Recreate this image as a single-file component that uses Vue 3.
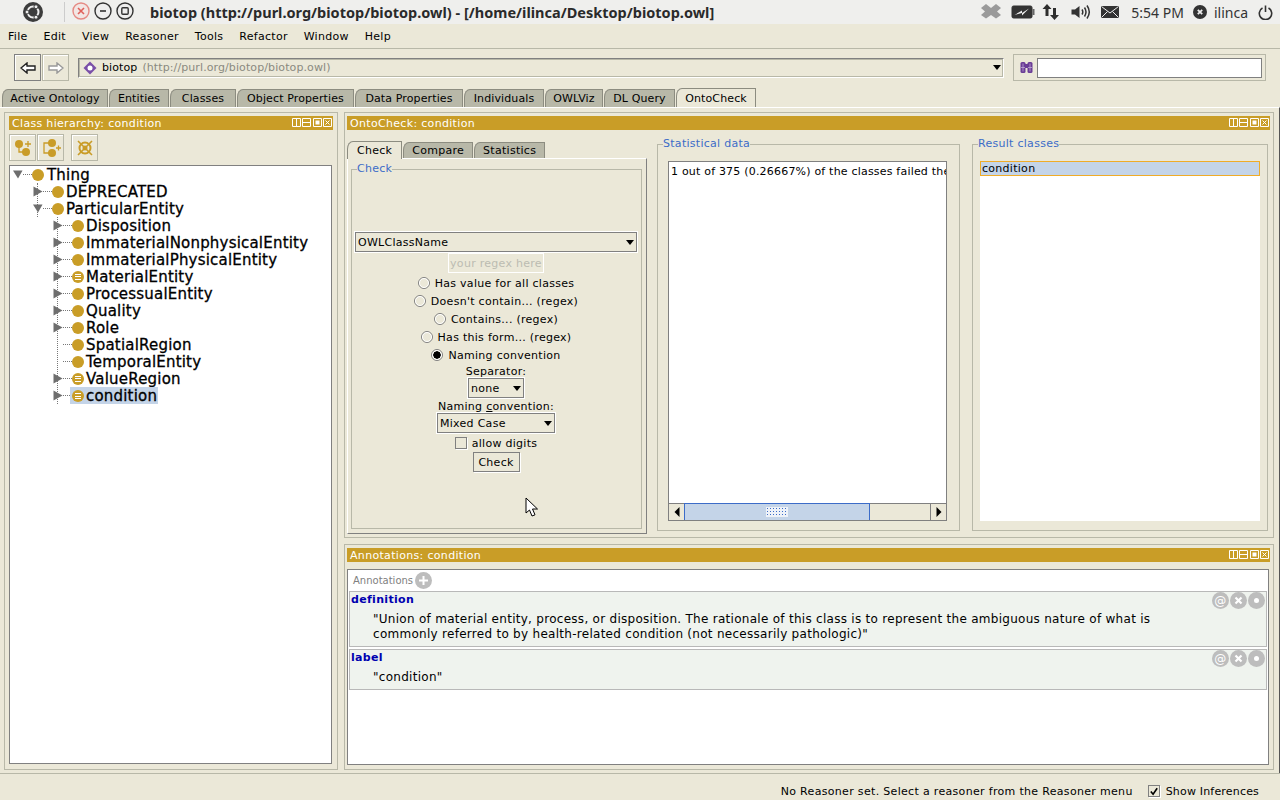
<script setup>
const menus = ['File', 'Edit', 'View', 'Reasoner', 'Tools', 'Refactor', 'Window', 'Help'];

const tabs = [
    { name: 'Active Ontology', width: 106 },
    { name: 'Entities', width: 60 },
    { name: 'Classes', width: 66 },
    { name: 'Object Properties', width: 117 },
    { name: 'Data Properties', width: 108 },
    { name: 'Individuals', width: 80 },
    { name: 'OWLViz', width: 58 },
    { name: 'DL Query', width: 71 },
    { name: 'OntoCheck', width: 80, active: true },
];

const level1 = [
    { name: 'DEPRECATED', arrow: 'right' },
    { name: 'ParticularEntity', arrow: 'down' },
];

const level2 = [
    { name: 'Disposition', arrow: 'right' },
    { name: 'ImmaterialNonphysicalEntity', arrow: 'right' },
    { name: 'ImmaterialPhysicalEntity', arrow: 'right' },
    { name: 'MaterialEntity', arrow: 'right', defined: true },
    { name: 'ProcessualEntity', arrow: 'right' },
    { name: 'Quality', arrow: 'right' },
    { name: 'Role', arrow: 'right' },
    { name: 'SpatialRegion' },
    { name: 'TemporalEntity' },
    { name: 'ValueRegion', arrow: 'right', defined: true },
    { name: 'condition', arrow: 'right', defined: true, selected: true },
];

const radios = [
    { label: "Has value for all classes" },
    { label: "Doesn't contain... (regex)" },
    { label: 'Contains... (regex)' },
    { label: 'Has this form... (regex)' },
    { label: 'Naming convention', checked: true },
];

const annotations = [
    {
        prop: 'definition',
        lines: [
            '"Union of material entity, process, or disposition. The rationale of this class is to represent the ambiguous nature of what is',
            'commonly referred to by health-related condition (not necessarily pathologic)"',
        ],
    },
    { prop: 'label', lines: ['"condition"'] },
];
</script>

<template>
    <div class="app">
        <header class="topbar">
            <svg class="ubuntu" width="22" height="22" viewBox="0 0 22 22">
                <circle cx="11" cy="11" r="10" fill="#3c3c3c" />
                <circle cx="11" cy="11" r="5.5" fill="none" stroke="#eee" stroke-width="2" />
                <circle cx="5" cy="11" r="2" fill="#eee" stroke="#3c3c3c" />
                <circle cx="14" cy="5.8" r="2" fill="#eee" stroke="#3c3c3c" />
                <circle cx="14" cy="16.2" r="2" fill="#eee" stroke="#3c3c3c" />
            </svg>
            <span class="top-sep"></span>
            <div class="win-btns">
                <svg width="18" height="18" viewBox="0 0 18 18">
                    <circle cx="9" cy="9" r="8" fill="#f2e6e4" stroke="#e58a84" stroke-width="1.4" />
                    <path d="M6 6l6 6M12 6l-6 6" stroke="#e0605a" stroke-width="1.6" />
                </svg>
                <svg width="18" height="18" viewBox="0 0 18 18">
                    <circle cx="9" cy="9" r="8" fill="#eee" stroke="#333" stroke-width="1.4" />
                    <path d="M6 9h6" stroke="#333" stroke-width="1.6" />
                </svg>
                <svg width="18" height="18" viewBox="0 0 18 18">
                    <circle cx="9" cy="9" r="8" fill="#eee" stroke="#333" stroke-width="1.4" />
                    <rect x="5.8" y="5.8" width="6.4" height="6.4" rx="1" fill="none" stroke="#333" stroke-width="1.4" />
                </svg>
            </div>
            <div class="win-title">biotop (http://purl.org/biotop/biotop.owl) - [/home/ilinca/Desktop/biotop.owl]</div>
            <div class="tray">
                <svg class="t-drop" width="20" height="18" viewBox="0 0 20 18">
                    <path d="M5 1l5 4 5-4 5 4-4 3.5 4 3.5-5 3.5-5-3.5-5 3.5-5-3.5 4-3.5-4-3.5z" fill="#9a9a9a" />
                </svg>
                <svg class="t-batt" width="24" height="14" viewBox="0 0 24 14">
                    <rect x="1" y="1" width="20" height="12" rx="1.5" fill="#333" stroke="#333" />
                    <rect x="21.5" y="4" width="2" height="6" fill="#666" />
                    <path d="M3.500 10L11 5.500V8L18 3.500 11 10.500V8z" fill="#eee" />
                </svg>
                <svg class="t-net" width="18" height="18" viewBox="0 0 18 18">
                    <path d="M5 1L0.5 6H3.5V13H6.5V6H9.5z" fill="#2e2e2e" />
                    <path d="M12.5 17L8 12H11V5H14V12H17z" fill="#2e2e2e" />
                </svg>
                <svg class="t-snd" width="20" height="16" viewBox="0 0 20 16">
                    <path d="M0.5 5.5H4L8.5 2V14L4 10.5H0.5z" fill="#333" />
                    <path d="M11 5.5q1.6 2.5 0 5M13.5 3.5q3 4.5 0 9M16 1.5q4.6 6.5 0 13" fill="none" stroke="#333" stroke-width="1.5" />
                </svg>
                <svg class="t-mail" width="18" height="12" viewBox="0 0 18 12">
                    <rect width="18" height="12" fill="#333" />
                    <path d="M0.5 0.5L9 7l8.5-6.500M0.500 11.500L6.500 5.500M17.500 11.500L11.500 5.500" fill="none" stroke="#eee" />
                </svg>
                <span class="t-time">5:54 PM</span>
                <svg class="t-user" width="14" height="14" viewBox="0 0 14 14">
                    <circle cx="7" cy="7" r="7" fill="#333" />
                    <path d="M4.800 4.800l4.400 4.400M9.200 4.800l-4.400 4.400" stroke="#eee" stroke-width="1.800" />
                </svg>
                <span class="t-name">ilinca</span>
                <svg class="t-power" width="15" height="15" viewBox="0 0 15 15">
                    <path d="M4.500 3a6.200 6.200 0 1 0 6 0" fill="none" stroke="#333" stroke-width="1.600" />
                    <path d="M7.500 0.500v6.500" stroke="#333" stroke-width="1.600" />
                </svg>
            </div>
        </header>

        <nav class="menubar">
            <span v-for="m in menus" :key="m" class="menu">{{ m }}</span>
        </nav>

        <div class="toolbar">
            <div class="nav-btns">
                <button class="nav-btn">
                    <svg width="16" height="12" viewBox="0 0 16 12">
                        <path d="M1 6L7 1V4H15V8H7V11z" fill="#fff" stroke="#222" stroke-width="1.400" />
                    </svg>
                </button>
                <button class="nav-btn off">
                    <svg width="16" height="12" viewBox="0 0 16 12">
                        <path d="M15 6L9 1V4H1V8H9V11z" fill="#fff" stroke="#999" stroke-width="1.400" />
                    </svg>
                </button>
            </div>
            <div class="address">
                <svg width="14" height="14" viewBox="0 0 14 14">
                    <path d="M7 0.500L13.500 7 7 13.500 0.500 7z" fill="#7a4fa8" />
                    <circle cx="7" cy="7" r="2.500" fill="#fff" />
                </svg>
                <span class="addr-name">biotop</span>
                <span class="addr-uri">(http://purl.org/biotop/biotop.owl)</span>
                <i class="caret addr-caret"></i>
            </div>
            <div class="search">
                <svg width="13" height="13" viewBox="0 0 13 13">
                    <rect x="0.500" y="1" width="5" height="11" rx="1.500" fill="#6a3d96" />
                    <rect x="7.500" y="1" width="5" height="11" rx="1.500" fill="#6a3d96" />
                    <rect x="5" y="3" width="3" height="4" fill="#6a3d96" />
                    <path d="M3 2.500v8M10 2.500v8M1 6.500h4M8 6.500h4" stroke="#c9b6dc" stroke-width="0.700" />
                </svg>
                <div class="search-input"></div>
            </div>
        </div>

        <div class="tabbar">
            <div
                v-for="t in tabs"
                :key="t.name"
                class="tab"
                :class="{ active: t.active }"
                :style="{ width: t.width + 'px' }"
            >
                {{ t.name }}
            </div>
        </div>

        <main class="workspace">
            <section class="view left-view">
                <div class="view-title">
                    <span>Class hierarchy: condition</span>
                    <svg class="view-btns" width="41" height="10" viewBox="0 0 41 10">
                        <path d="M0.500 0.500h8v8h-8zM4.500 0.500v8M10.500 0.500h8v8h-8zM10.500 4.500h8M21.500 0.500h8v8h-8zM31.500 0.500h8v8h-8zM33.500 2.500l4 4M37.500 2.500l-4 4" fill="none" stroke="#fff" />
                        <rect x="23.500" y="2.500" width="4" height="4" fill="#fff" />
                    </svg>
                </div>
                <div class="tree-tools">
                    <button class="tool-btn">
                        <svg width="20" height="20" viewBox="0 0 20 20">
                            <circle cx="6" cy="6" r="4" fill="#c99c28" />
                            <circle cx="13" cy="14" r="4" fill="#c99c28" />
                            <path d="M6 9v5h4M15 3v6M12 6h6" fill="none" stroke="#c99c28" stroke-width="1.300" />
                        </svg>
                    </button>
                    <button class="tool-btn">
                        <svg width="20" height="20" viewBox="0 0 20 20">
                            <circle cx="11" cy="5" r="4" fill="#c99c28" />
                            <circle cx="11" cy="15" r="4" fill="#c99c28" />
                            <path d="M8 5H3v10h5M15 10h5M17.500 7.500v5" fill="none" stroke="#c99c28" stroke-width="1.300" />
                        </svg>
                    </button>
                    <button class="tool-btn gap">
                        <svg width="20" height="20" viewBox="0 0 20 20">
                            <circle cx="10" cy="10" r="5.500" fill="none" stroke="#c99c28" stroke-width="2" />
                            <circle cx="10" cy="10" r="2.500" fill="#c99c28" />
                            <path d="M3 3l14 14M17 3L3 17" stroke="#c99c28" stroke-width="1.600" />
                        </svg>
                    </button>
                </div>
                <div class="tree">
                    <div class="tree-row root">
                        <svg class="arrow" width="10" height="17" viewBox="0 0 10 17"><path d="M0 4.500h9.500L5 12.500z" fill="#6e6e6e" /></svg>
                        <i class="hline"></i>
                        <i class="dot"></i>
                        <span class="tree-label">Thing</span>
                    </div>
                    <div class="branch b1">
                        <div v-for="n in level1" :key="n.name" class="tree-row">
                            <svg v-if="n.arrow === 'right'" class="arrow" width="10" height="17" viewBox="0 0 10 17"><path d="M0.500 3.500v10L9.500 8.500z" fill="#6e6e6e" /></svg>
                            <svg v-else class="arrow" width="10" height="17" viewBox="0 0 10 17"><path d="M0 4.500h9.500L5 12.500z" fill="#6e6e6e" /></svg>
                            <i class="hline"></i>
                            <i class="dot"></i>
                            <span class="tree-label">{{ n.name }}</span>
                        </div>
                    </div>
                    <div class="branch b2">
                        <div v-for="n in level2" :key="n.name" class="tree-row">
                            <svg v-if="n.arrow" class="arrow" width="10" height="17" viewBox="0 0 10 17"><path d="M0.500 3.500v10L9.500 8.500z" fill="#6e6e6e" /></svg>
                            <span v-else class="arrow"></span>
                            <i class="hline"></i>
                            <span class="node" :class="{ selected: n.selected }">
                                <i class="dot" :class="{ defined: n.defined }"></i>
                                <span class="tree-label">{{ n.name }}</span>
                            </span>
                        </div>
                    </div>
                </div>
            </section>

            <div class="right-col">
                <section class="view onto-view">
                    <div class="view-title">
                        <span>OntoCheck: condition</span>
                        <svg class="view-btns" width="41" height="10" viewBox="0 0 41 10">
                            <path d="M0.500 0.500h8v8h-8zM4.500 0.500v8M10.500 0.500h8v8h-8zM10.500 4.500h8M21.500 0.500h8v8h-8zM31.500 0.500h8v8h-8zM33.500 2.500l4 4M37.500 2.500l-4 4" fill="none" stroke="#fff" />
                            <rect x="23.500" y="2.500" width="4" height="4" fill="#fff" />
                        </svg>
                    </div>
                    <div class="onto-body">
                        <div class="check-side">
                            <div class="sub-tabs">
                                <div class="sub-tab active">Check</div>
                                <div class="sub-tab">Compare</div>
                                <div class="sub-tab">Statistics</div>
                            </div>
                            <div class="sub-pane">
                                <fieldset class="group check-group">
                                    <legend>Check</legend>
                                    <div class="combo wide"><span>OWLClassName</span><i class="caret"></i></div>
                                    <div class="regex">your regex here</div>
                                    <div v-for="r in radios" :key="r.label" class="radio-row">
                                        <i class="radio" :class="{ checked: r.checked }"></i>
                                        <span>{{ r.label }}</span>
                                    </div>
                                    <div class="field-label sep-label">Separator:</div>
                                    <div class="combo sep"><span>none</span><i class="caret"></i></div>
                                    <div class="field-label conv-label">Naming <u>c</u>onvention:</div>
                                    <div class="combo conv"><span>Mixed Case</span><i class="caret"></i></div>
                                    <div class="check-row"><i class="checkbox"></i><span>allow digits</span></div>
                                    <button class="check-btn">Check</button>
                                </fieldset>
                            </div>
                        </div>

                        <fieldset class="group stats-group">
                            <legend>Statistical data</legend>
                            <div class="stats-box">
                                <div class="stats-text">1 out of 375 (0.26667%) of the classes failed the</div>
                                <div class="hscroll">
                                    <div class="sb-arrow">
                                        <svg width="6" height="10" viewBox="0 0 6 10"><path d="M5.500 0v10L0.500 5z" fill="#000" /></svg>
                                    </div>
                                    <div class="sb-thumb"><i class="grip"></i></div>
                                    <div class="sb-track"></div>
                                    <div class="sb-arrow end">
                                        <svg width="6" height="10" viewBox="0 0 6 10"><path d="M0.500 0v10L5.500 5z" fill="#000" /></svg>
                                    </div>
                                </div>
                            </div>
                        </fieldset>

                        <fieldset class="group result-group">
                            <legend>Result classes</legend>
                            <div class="result-box">
                                <div class="result-row">condition</div>
                            </div>
                        </fieldset>
                    </div>
                </section>

                <section class="view anno-view">
                    <div class="view-title">
                        <span>Annotations: condition</span>
                        <svg class="view-btns" width="41" height="10" viewBox="0 0 41 10">
                            <path d="M0.500 0.500h8v8h-8zM4.500 0.500v8M10.500 0.500h8v8h-8zM10.500 4.500h8M21.500 0.500h8v8h-8zM31.500 0.500h8v8h-8zM33.500 2.500l4 4M37.500 2.500l-4 4" fill="none" stroke="#fff" />
                            <rect x="23.500" y="2.500" width="4" height="4" fill="#fff" />
                        </svg>
                    </div>
                    <div class="anno-box">
                        <div class="anno-head">
                            <span>Annotations</span>
                            <svg width="17" height="17" viewBox="0 0 17 17">
                                <circle cx="8.500" cy="8.500" r="8.500" fill="#bdbdbd" />
                                <path d="M8.500 4v9M4 8.500h9" stroke="#fff" stroke-width="2" />
                            </svg>
                        </div>
                        <div v-for="a in annotations" :key="a.prop" class="anno-row">
                            <div class="anno-prop">{{ a.prop }}</div>
                            <div class="anno-value">
                                <div v-for="l in a.lines" :key="l">{{ l }}</div>
                            </div>
                            <div class="anno-actions">
                                <svg width="17" height="17" viewBox="0 0 17 17">
                                    <circle cx="8.500" cy="8.500" r="8.500" fill="#bdbdbd" />
                                    <text x="8.500" y="12.500" text-anchor="middle" font-size="12" fill="#fff" font-family="DejaVu Sans">@</text>
                                </svg>
                                <svg width="17" height="17" viewBox="0 0 17 17">
                                    <circle cx="8.500" cy="8.500" r="8.500" fill="#bdbdbd" />
                                    <path d="M5.500 5.500l6 6M11.500 5.500l-6 6" stroke="#fff" stroke-width="2.200" />
                                </svg>
                                <svg width="17" height="17" viewBox="0 0 17 17">
                                    <circle cx="8.500" cy="8.500" r="8.500" fill="#bdbdbd" />
                                    <circle cx="8.500" cy="8.500" r="2.500" fill="#fff" />
                                </svg>
                            </div>
                        </div>
                    </div>
                </section>
            </div>
        </main>

        <footer class="statusbar">
            <span class="status-msg">No Reasoner set. Select a reasoner from the Reasoner menu</span>
            <i class="checkbox status-check">
                <svg width="11" height="11" viewBox="0 0 11 11"><path d="M2 5.500l2.500 3L9 2" fill="none" stroke="#000" stroke-width="1.800" /></svg>
            </i>
            <span class="status-infer">Show Inferences</span>
        </footer>

        <svg class="cursor" width="14" height="20" viewBox="0 0 14 20">
            <path d="M1 1V16L4.500 13 7 19 10 17.800 7.500 12H12.500z" fill="#fff" stroke="#000" />
        </svg>
    </div>
</template>

<style scoped>
.app {
    position: relative;
    width: 1280px;
    height: 800px;
    overflow: hidden;
    display: flex;
    flex-direction: column;
    background: #ebe8d8;
    color: #000;
    font: 11px 'DejaVu Sans', sans-serif;
    letter-spacing: 0.28px;
}

i {
    display: block;
    flex-shrink: 0;
}

button {
    padding: 0;
    font: inherit;
    letter-spacing: inherit;
    background: transparent;
}

/* ubuntu panel */
.topbar {
    height: 24px;
    flex-shrink: 0;
    display: flex;
    align-items: center;
    background: #efefed;
    padding-left: 22px;
    letter-spacing: 0;
}

.top-sep {
    width: 1px;
    height: 20px;
    margin-left: 20px;
    background: #ccc;
}

.win-btns {
    display: flex;
    gap: 4px;
    margin-left: 7px;
    margin-top: -2px;
}

.win-title {
    margin-left: 16px;
    font: bold 14.5px 'Noto Sans', sans-serif;
    color: #2a2a2a;
    white-space: nowrap;
}

.tray {
    margin-left: auto;
    display: flex;
    align-items: center;
    padding-right: 7px;
    color: #333;
    font: 14px 'Noto Sans', sans-serif;
}

.t-batt {
    margin-left: 10px;
}
.t-net {
    margin-left: 7px;
}
.t-snd {
    margin-left: 11px;
}
.t-mail {
    margin-left: 10px;
}
.t-time {
    margin-left: 12px;
}
.t-user {
    margin-left: 9px;
}
.t-name {
    margin-left: 7px;
}
.t-power {
    margin-left: 10px;
}

/* menus */
.menubar {
    height: 24px;
    flex-shrink: 0;
    display: flex;
    align-items: center;
    gap: 16px;
    padding-left: 8px;
    border-bottom: 1px solid #b8b8a8;
    box-sizing: content-box;
}

.toolbar {
    height: 39px;
    flex-shrink: 0;
    display: flex;
    align-items: center;
    box-sizing: border-box;
    padding: 0 14px 2px;
}

.nav-btns {
    display: flex;
    gap: 1px;
}

.nav-btn {
    width: 27px;
    height: 27px;
    display: flex;
    align-items: center;
    justify-content: center;
    border: 1px solid #808080;
    box-shadow: 1px 1px 0 #fff inset;
}

.nav-btn.off {
    border-color: #b8b8a8;
}

.address {
    flex: 1;
    height: 20px;
    margin-left: 9px;
    display: flex;
    align-items: center;
    padding-left: 4px;
    box-sizing: border-box;
    border: 1px solid #808080;
    border-right-color: #fff;
    border-bottom-color: #fff;
    outline: 1px solid #b8b8a8;
    outline-offset: -2px;
    letter-spacing: 0.1px;
}

.addr-name {
    margin-left: 5px;
}

.addr-uri {
    margin-left: 5px;
    color: #8a8a80;
}

.caret {
    width: 0;
    height: 0;
    border-left: 4px solid transparent;
    border-right: 4px solid transparent;
    border-top: 5px solid #000;
}

.addr-caret {
    margin-left: auto;
    margin-right: 2px;
}

.search {
    width: 253px;
    height: 27px;
    margin-left: 9px;
    margin-right: 0;
    display: flex;
    align-items: center;
    gap: 4px;
    padding: 0 3px 0 6px;
    box-sizing: border-box;
    border: 1px solid #b8b8a8;
}

.search-input {
    flex: 1;
    height: 20px;
    box-sizing: border-box;
    background: #fff;
    border: 1px solid #808080;
}

/* workspace tabs */
.tabbar {
    height: 19px;
    flex-shrink: 0;
    display: flex;
    gap: 1px;
    padding-left: 2px;
    letter-spacing: 0.12px;
}

.tab {
    height: 18px;
    margin-top: 1px;
    box-sizing: border-box;
    display: flex;
    align-items: center;
    justify-content: center;
    background: #b8b8a8;
    border: 1px solid #8c8c80;
    border-bottom: none;
    border-top-left-radius: 6px 8px;
    white-space: nowrap;
}

.tab.active {
    background: #ebe8d8;
    height: 19px;
    margin-top: 0;
    border-bottom: none;
}

.workspace {
    flex: 1;
    min-height: 0;
    display: flex;
    gap: 6px;
    padding: 4px 5px 3px 4px;
    border-top: 1px solid #fff;
    border-right: 1px solid #555;
    margin-bottom: 0;
}

.view {
    box-sizing: border-box;
    display: flex;
    flex-direction: column;
    border: 1px solid #b8b8a8;
    padding: 3px 4px;
}

.left-view {
    width: 334px;
    flex-shrink: 0;
    padding-bottom: 5px;
}

.view-title {
    height: 14px;
    flex-shrink: 0;
    display: flex;
    align-items: center;
    justify-content: space-between;
    padding: 0 0 0 3px;
    background: #c99d27;
    color: #fff;
    letter-spacing: 0.32px;
}

.tree-tools {
    display: flex;
    gap: 1px;
    margin: 4px 0;
}

.tool-btn {
    width: 27px;
    height: 27px;
    display: flex;
    align-items: center;
    justify-content: center;
    border: 1px solid #b8b8a8;
    box-shadow: 1px 1px 0 #fff inset;
}

.tool-btn.gap {
    margin-left: 6px;
}

.tree {
    flex: 1;
    background: #fff;
    border: 1px solid #808080;
    margin-right: 1px;
    padding: 0 0 0 3px;
    font-size: 15px;
    letter-spacing: 0.2px;
    -webkit-text-stroke: 0.3px #000;
    overflow: hidden;
}

.tree-row {
    height: 17px;
    display: flex;
    align-items: center;
    white-space: nowrap;
}

.arrow {
    width: 10px;
    height: 17px;
    flex-shrink: 0;
    background: #fff;
}

.hline {
    width: 9px;
    border-top: 1px dotted #777;
}

.branch {
    border-left: 1px dotted #777;
}

.branch .tree-row {
    margin-left: -5px;
}

.branch .arrow {
    background: transparent;
}

.b1 {
    margin-left: 24px;
}

.b2 {
    margin-left: 44px;
}

.dot {
    position: relative;
    width: 12px;
    height: 12px;
    border-radius: 50%;
    background: #c99d27;
}

.dot.defined::after {
    content: '';
    position: absolute;
    left: 3px;
    right: 3px;
    top: 3px;
    height: 6px;
    background: repeating-linear-gradient(#fff 0 1px, transparent 1px 2.5px);
}

.tree-label {
    margin-left: 2px;
}

.root .tree-label {
    margin-left: 3px;
}

.node {
    display: flex;
    align-items: center;
    height: 17px;
}

.node.selected {
    background: #c4d4e8;
    padding: 0 1px 0 2px;
    margin-left: -2px;
}

.right-col {
    flex: 1;
    min-width: 0;
    display: flex;
    flex-direction: column;
    gap: 6px;
}

.onto-view {
    height: 426px;
    flex-shrink: 0;
    padding: 3px 3px 0 2px;
}

.onto-body {
    flex: 1;
    min-height: 0;
    display: flex;
    padding-top: 11px;
}

.check-side {
    width: 300px;
    flex-shrink: 0;
    display: flex;
    flex-direction: column;
    height: 393px;
}

.sub-tabs {
    display: flex;
    gap: 1px;
    height: 18px;
    flex-shrink: 0;
}

.sub-tab {
    padding: 0 8px 1px;
    height: 17px;
    margin-top: 1px;
    box-sizing: border-box;
    display: flex;
    align-items: center;
    background: #b8b8a8;
    border: 1px solid #8c8c80;
    border-bottom: none;
    border-top-left-radius: 6px 8px;
}

.sub-tab.active {
    background: #ebe8d8;
    height: 18px;
    margin-top: 0;
    padding: 0 9px;
    position: relative;
    z-index: 1;
    margin-bottom: -1px;
}

.sub-pane {
    flex: 1;
    min-height: 0;
    display: flex;
    box-sizing: border-box;
    padding: 3px 4px 4px 3px;
    border-top: 1px solid #fff;
    border-right: 1px solid #808080;
    border-bottom: 1px solid #808080;
    border-left: 1px solid #fff;
    margin-top: -1px;
}

.group {
    margin: 0;
    min-width: 0;
    box-sizing: border-box;
    border: 1px solid #b8b8a8;
    padding: 0;
}

.group legend {
    margin-left: 5px;
    padding: 0;
    color: #3c6cc8;
    line-height: 14px;
}

.check-group {
    flex: 1;
    display: flex;
    flex-direction: column;
    align-items: center;
    padding-right: 1px;
}

.combo {
    box-sizing: border-box;
    height: 20px;
    display: flex;
    align-items: center;
    justify-content: space-between;
    padding: 0 2px;
    border: 1px solid #808080;
    outline: 1px solid #fff;
    outline-offset: 0;
}

.combo.wide {
    width: 282px;
    margin-top: 56px;
}

.regex {
    width: 96px;
    height: 20px;
    margin-top: 1px;
    margin-bottom: 1px;
    box-sizing: border-box;
    display: flex;
    align-items: center;
    justify-content: center;
    background: #ebe8d8;
    border: 1px solid #fff;
    color: #bcbcb2;
}

.radio-row {
    height: 18px;
    display: flex;
    align-items: center;
    gap: 5px;
}

.radio {
    width: 12px;
    height: 12px;
    box-sizing: border-box;
    border-radius: 50%;
    border: 1px solid #808080;
    outline: 1px solid #fff;
    outline-offset: -2px;
}

.radio.checked {
    background: radial-gradient(circle, #000 0 3.500px, #ebe8d8 4px);
}

.field-label {
    line-height: 13px;
}

.sep-label {
    margin-top: 1px;
}

.combo.sep {
    width: 56px;
}

.conv-label {
    margin-top: 2px;
}

.combo.conv {
    width: 118px;
}

.check-row {
    height: 18px;
    margin-top: 1px;
    display: flex;
    align-items: center;
    gap: 5px;
}

.checkbox {
    width: 12px;
    height: 12px;
    box-sizing: border-box;
    border: 1px solid #808080;
    box-shadow: 1px 1px 0 #fff;
}

.check-btn {
    width: 47px;
    height: 20px;
    border: 1px solid #808080;
    box-shadow: 1px 1px 0 #fff;
    color: #000;
}

.stats-group {
    width: 303px;
    margin-left: 10px;
    margin-top: -4px;
    height: 394px;
    flex-shrink: 0;
    padding: 10px 12px 9px 10px;
    display: flex;
}

.stats-group legend {
    margin-left: -5px;
}

.stats-box {
    flex: 1;
    min-width: 0;
    display: flex;
    flex-direction: column;
    background: #fff;
    border: 1px solid #808080;
}

.stats-text {
    flex: 1;
    padding: 3px 2px;
    white-space: nowrap;
    overflow: hidden;
    letter-spacing: 0.2px;
}

.hscroll {
    height: 16px;
    display: flex;
    border-top: 1px solid #808080;
    background: #ebe8d8;
}

.sb-arrow {
    width: 15px;
    display: flex;
    align-items: center;
    justify-content: center;
}

.sb-arrow.end {
    border-left: 1px solid #808080;
}

.sb-thumb {
    width: 186px;
    display: flex;
    align-items: center;
    justify-content: center;
    background: #c4d4e8;
    border: 1px solid #3c6cc8;
    border-bottom: none;
    box-sizing: border-box;
    margin-top: -1px;
}

.grip {
    width: 22px;
    height: 10px;
    background: radial-gradient(circle, #3c6cc8 0.6px, transparent 0.8px) 0 0 / 3px 3px, #eef2f8;
}

.sb-track {
    flex: 1;
}

.result-group {
    width: 296px;
    margin-left: 12px;
    margin-top: -4px;
    height: 394px;
    flex-shrink: 0;
    padding: 10px 7px 9px 7px;
    display: flex;
}

.result-group legend {
    margin-left: -2px;
}

.result-box {
    flex: 1;
    min-width: 0;
    background: #fff;
}

.result-row {
    height: 15px;
    box-sizing: border-box;
    display: flex;
    align-items: center;
    padding-left: 1px;
    background: #c4d4e8;
    border: 1px solid #f0ac28;
}

.anno-view {
    flex: 1;
    min-height: 0;
    padding: 3px 3px 4px 2px;
}

.anno-box {
    flex: 1;
    min-height: 0;
    margin-top: 7px;
    margin-right: 1px;
    background: #fff;
    border: 1px solid #808080;
    padding: 0 1px;
}

.anno-head {
    height: 21px;
    display: flex;
    align-items: center;
    gap: 2px;
    padding-left: 4px;
    color: #808080;
    font-size: 10px;
    letter-spacing: 0;
}

.anno-row {
    position: relative;
    box-sizing: border-box;
    background: #eff3ee;
    border: 1px solid #b8b8b8;
    margin-bottom: 2px;
    padding: 1px 0 4px 1px;
}

.anno-prop {
    color: #0000b0;
    font-weight: bold;
    line-height: 14px;
    letter-spacing: 0.32px;
}

.anno-value {
    margin-top: 5px;
    padding-left: 22px;
    font-size: 12px;
    line-height: 15px;
}

.anno-actions {
    position: absolute;
    top: 0;
    right: 1px;
    display: flex;
    gap: 1px;
}

.statusbar {
    height: 27px;
    flex-shrink: 0;
    display: flex;
    align-items: center;
    justify-content: flex-end;
    padding: 8px 21px 0 0;
    box-sizing: border-box;
    border-top: 1px solid #b8b8a8;
}

.status-msg {
    letter-spacing: 0.32px;
}

.status-infer {
    letter-spacing: 0.18px;
}

.status-check {
    margin: 0 6px 0 15px;
    display: flex;
    align-items: center;
    justify-content: center;
}

.cursor {
    position: absolute;
    left: 525px;
    top: 497px;
}
</style>

<style>
html,
body {
    margin: 0;
    background: #ebe8d8;
}
</style>
